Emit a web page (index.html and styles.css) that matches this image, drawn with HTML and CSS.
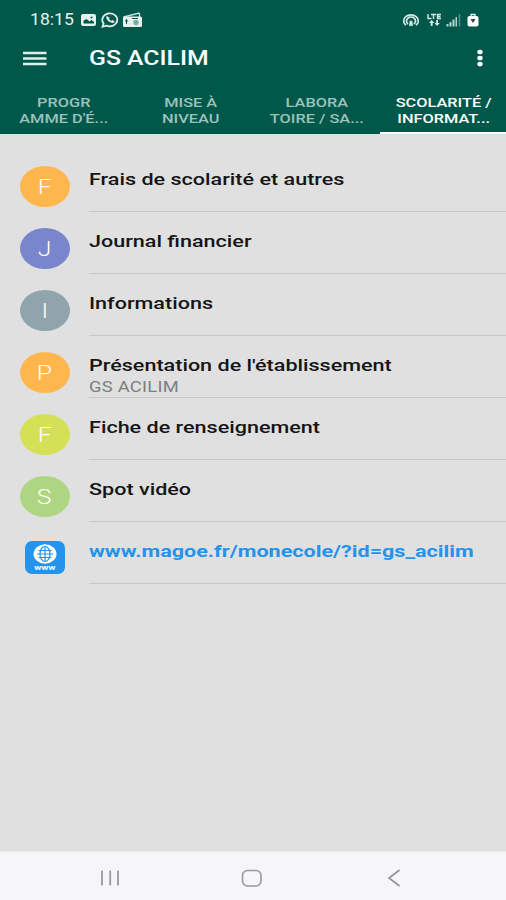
FILE: index.html
```html
<!DOCTYPE html>
<html lang="fr">
<head>
<meta charset="utf-8">
<title>GS ACILIM</title>
<link rel="stylesheet" href="styles.css">
</head>
<body>
<div class="app">
  <header class="header">
    <div class="status">
      <span class="clock"><span class="wide">18:15</span></span>
      <svg class="status-left" width="64" height="18" viewBox="0 0 64 18">
        <rect x="1" y="3" width="15" height="12" rx="2" fill="#e6f1ee"/>
        <path d="M3.500 12.500V9.500L6.500 8l3 2.500 2-1.500 2.500 2v1.500z" fill="#00584b"/><circle cx="11.500" cy="6.500" r="1" fill="#00584b"/>
        <path d="M22.500 15.800l1.200-3.200A7.500 6.400 0 1 1 26.500 14.600z" fill="none" stroke="#e6f1ee" stroke-width="1.700"/>
        <path d="M27 5c-2 1 .2 4.500 2.400 5.800 2.300 1.400 4.600 1.500 5.400 0l-2.200-1.700-1.600.9-2.200-2.200.9-.9z" fill="#e6f1ee"/>
        <path d="M43.500 6l16-4M59.500 2v4" stroke="#c7dfda" stroke-width="1.300"/>
        <rect x="43" y="5.500" width="19" height="10.500" rx="1.500" fill="#e6f1ee"/>
        <path d="M46.500 8v5M45 10h3M52 7.500h6" stroke="#00584b" stroke-width="1"/><circle cx="56" cy="11.500" r="2.700" fill="#79ada4"/>
      </svg>
      <svg class="status-right" width="78" height="18" viewBox="0 0 78 18">
        <g fill="none" stroke="#d8e9e5" stroke-width="1.700">
          <path d="M4 14.200A7.300 6 0 1 1 14 14.200M6 13A4.500 3.900 0 1 1 12 13"/>
          <path d="M7.800 15l.7-4.500h1l.7 4.500"/>
          <path d="M26 3v4.500h3.500M29 3.500h5M31.500 3.500v4.500M39 3.500H35.500v4h3.500M35.500 5.500h3" stroke-width="1.400"/>
        </g>
        <path d="M27 12l2.700-3 2.700 3h-1.800v3h-1.800v-3zM32.500 12h1.700V9H36v3h1.800L35 15z" fill="#d8e9e5"/>
        <path d="M44.500 13h2v2.500h-2zM47.500 11h2v4.500h-2zM50.500 8.500h2v7h-2zM53.500 6h1.500v9.500h-1.500z" fill="#b8d6cf"/>
        <path d="M57.500 3v12.500" stroke="#4f9185" stroke-width="1.500"/>
        <path d="M69 5.500V3.500h4v2" fill="none" stroke="#e6f1ee" stroke-width="1.300"/>
        <rect x="65.500" y="5" width="11" height="10.500" rx="2" fill="#fff"/>
        <path d="M68.500 8h5l-2.500 4z" fill="#244a43"/>
      </svg>
    </div>
    <div class="toolbar">
      <svg class="menu" width="24" height="15" viewBox="0 0 24 15"><path d="M0 2h23.500M0 7.500h23.500M0 13h23.500" stroke="#e0eee8" stroke-width="2.600"/></svg>
      <h1 class="title"><span class="wide">GS ACILIM</span></h1>
      <svg class="more" width="8" height="18" viewBox="0 0 8 18" fill="#fff"><ellipse cx="4" cy="3" rx="2.700" ry="2.300"/><ellipse cx="4" cy="9" rx="2.700" ry="2.300"/><ellipse cx="4" cy="15" rx="2.700" ry="2.300"/></svg>
    </div>
    <nav class="tabs">
      <a class="tab"><span class="wide">PROGR<br>AMME D'É...</span></a>
      <a class="tab"><span class="wide">MISE À<br>NIVEAU</span></a>
      <a class="tab"><span class="wide">LABORA<br>TOIRE / SA...</span></a>
      <a class="tab active"><span class="wide">SCOLARITÉ /<br>INFORMAT...</span></a>
    </nav>
  </header>
  <main class="list">
    <div class="row"><div class="avatar orange"><span class="wide">F</span></div><div class="content"><div class="name"><span class="wide">Frais de scolarité et autres</span></div></div></div>
    <div class="row"><div class="avatar indigo"><span class="wide">J</span></div><div class="content"><div class="name"><span class="wide">Journal financier</span></div></div></div>
    <div class="row"><div class="avatar slate"><span class="wide">I</span></div><div class="content"><div class="name"><span class="wide">Informations</span></div></div></div>
    <div class="row"><div class="avatar orange"><span class="wide">P</span></div><div class="content"><div class="name"><span class="wide">Présentation de l'établissement</span></div><div class="sub"><span class="wide">GS ACILIM</span></div></div></div>
    <div class="row"><div class="avatar lime"><span class="wide">F</span></div><div class="content"><div class="name"><span class="wide">Fiche de renseignement</span></div></div></div>
    <div class="row"><div class="avatar green"><span class="wide">S</span></div><div class="content"><div class="name"><span class="wide">Spot vidéo</span></div></div></div>
    <div class="row">
      <div class="web">
        <svg width="24" height="20" viewBox="0 0 24 20"><ellipse cx="12" cy="10" rx="11.500" ry="9.700" fill="#fff"/><g fill="none" stroke="#2493ec" stroke-width="1.200"><path d="M12 3v14M4 10h16M5.500 6.500h13M5.500 13.500h13"/><ellipse cx="12" cy="10" rx="5" ry="7.500"/></g></svg>
        <span class="www"><span class="wide">www</span></span>
      </div>
      <div class="content"><div class="name link"><span class="wide">www.magoe.fr/monecole/?id=gs_acilim</span></div></div>
    </div>
  </main>
  <footer class="navbar">
    <svg width="20" height="16" viewBox="0 0 20 16"><path d="M2 .5v15M10.200 .5v15M18 .5v15" stroke="#9c9c9e" stroke-width="1.800"/></svg>
    <svg class="home" width="22" height="18" viewBox="0 0 22 18"><rect x="1.500" y="1.500" width="18.500" height="15.500" rx="5" fill="none" stroke="#98989a" stroke-width="1.600"/></svg>
    <svg width="14" height="18" viewBox="0 0 14 18"><path d="M12.500 1L2 9l10.500 8" fill="none" stroke="#929294" stroke-width="1.600"/></svg>
  </footer>
</div>
</body>
</html>
```

FILE: styles.css
```css
* { box-sizing: border-box; }
body { margin: 0; font-family: Roboto, sans-serif; background: #e0e0e0; }
svg { display: block; flex: none; }
.app { width: 506px; height: 900px; display: flex; flex-direction: column; background: #e0e0e0; overflow: hidden; }
.wide { display: inline-block; transform: scaleX(1.21); transform-origin: left center; white-space: nowrap; }

.header { height: 134px; background: #00584b; color: #fff; }
.status { height: 38px; padding: 1px 26px 0 30px; display: flex; align-items: center; }
.clock { width: 50px; font-size: 16px; line-height: 20px; color: #e6f1ee; }
.clock .wide { transform: scaleX(1.1); }
.status-right { margin-left: auto; }
.toolbar { height: 40px; padding: 0 22px 0 23px; display: flex; align-items: center; }
.title { margin: 0 0 0 42px; font-size: 20.500px; line-height: 24px; font-weight: 500; }
.more { margin-left: auto; }
.tabs { height: 56px; display: grid; grid-template-columns: repeat(4, 1fr); }
.tab { padding: 16px 0 0 1px; text-align: center; font-size: 13.500px; line-height: 16px; font-weight: 500; color: #9dc2bb; border-bottom: 2px solid transparent; }
.tab .wide, .avatar .wide, .www .wide { transform-origin: center; }
.tab.active { color: #fff; border-bottom-color: #fff; }

.list { flex: 1; padding-top: 16px; }
.row { height: 62px; display: flex; align-items: stretch; padding-left: 20px; }
.avatar { width: 50px; height: 41px; margin: 16px 19px 0 0; padding-right: 1px; border-radius: 50%; display: flex; align-items: center; justify-content: center; font-size: 20.500px; font-weight: 300; color: #fff; }
.orange { background: #ffb64d; }
.indigo { background: #7986cb; }
.slate { background: #90a4ae; }
.lime { background: #d4e157; }
.green { background: #aed581; }
.content { flex: 1; border-bottom: 1px solid #c9c9c9; padding-top: 19px; }
.name { font-size: 17.300px; line-height: 20px; font-weight: 500; color: #151515; }
.name .wide { transform: scaleX(1.248); }
.link { font-weight: 700; color: #2493ec; }
.sub { padding-top: 4px; font-size: 15.200px; line-height: 17px; letter-spacing: .2px; color: #7e7e7e; }
.web { width: 40px; height: 33px; margin: 19px 24px 0 5px; padding-top: 3px; border-radius: 7px; background: #2493ec; display: flex; flex-direction: column; align-items: center; }
.www { height: 8px; font-size: 8px; line-height: 7px; font-weight: 700; color: #fff; }

.navbar { height: 49px; background: #f6f6f8; border-top: 1px solid #ebebed; padding: 4px 105px 0 100px; display: flex; align-items: center; justify-content: space-between; }
.home { margin-right: 4px; }
```
